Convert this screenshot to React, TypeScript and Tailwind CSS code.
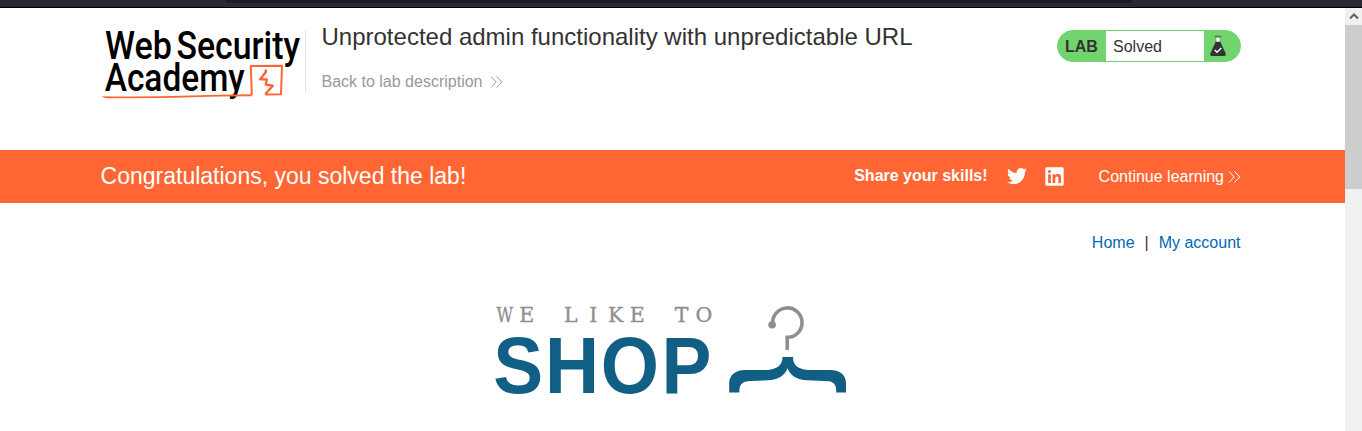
import { FaLinkedin, FaTwitter } from 'react-icons/fa';

function Chevrons({ className }: { className: string }) {
  return (
    <svg className={className} width="13" height="12" viewBox="0 0 13 12" fill="none" stroke="currentColor" strokeWidth="1">
      <path d="M1 .5 6.2 6 1 11.5M6.5 .5 11.8 6 6.5 11.5" />
    </svg>
  );
}

function AcademyLogo() {
  return (
    <svg className="block shrink-0 overflow-visible" width="205" height="78" viewBox="100 25 205 78" fontFamily="Roboto, sans-serif" fontWeight="500" fontSize="38">
      <g fill="#000">
        <text x="105" y="58.7" textLength="67" lengthAdjust="spacingAndGlyphs">Web</text>
        <text x="176.5" y="58.7" textLength="123.5" lengthAdjust="spacingAndGlyphs">Security</text>
        <text x="104.7" y="91.2" textLength="140" lengthAdjust="spacingAndGlyphs">Academy</text>
      </g>
      <g fill="none" stroke="#ff6633" strokeLinejoin="round">
        <path d="M251.8 95.2 250.8 66 282 65.8 281 94.2 265.2 94.4" strokeWidth="2" />
        <path d="M265.2 94.2 272.8 85.8 265.8 84.6 266.8 79.4 260.2 79.2 265.8 72V69.5" strokeWidth="2.4" />
      </g>
      <path d="M101.7 96.3Q145 97 190 95.6T252 94.3L251.5 96.2Q220 96.3 190 97.3T107 98.2Q103 97.7 101.7 96.3Z" fill="#ff6633" />
    </svg>
  );
}

function Flask() {
  return (
    <svg width="18" height="22" viewBox="0 0 18 22">
      <path d="M5.7 1.5H12.3" stroke="#52745a" strokeWidth="1.3" />
      <path d="M6.9 2.3H11.1V7.5H6.9Z" fill="#fff" stroke="#689b6b" strokeWidth=".8" />
      <path d="M6.7 6.8H11.3L16.8 18.7Q17.3 20.9 15.2 21H2.8Q.7 20.9 1.2 18.7Z" fill="#333332" />
      <path d="m5.7 15 2.3 2.3 4.3-4.3" fill="none" stroke="#fff" strokeWidth="1.4" />
    </svg>
  );
}

function ShopLogo() {
  return (
    <svg className="block overflow-visible" width="354" height="92" viewBox="494 304 354 92">
      <g fill="#8f8f8f" stroke="#8f8f8f" strokeWidth=".35" fontFamily="'DejaVu Serif', serif" fontSize="20.5">
        <text x="496.5" y="321.5" textLength="16.5" lengthAdjust="spacingAndGlyphs">W</text>
        <text x="526.8 570.7 593.2 615.7 637.3 681.5 704" y="321.5" textAnchor="middle">ELIKETO</text>
      </g>
      <text transform="scale(.93 1)" x="530.5 586 646 711.3" y="392.7" fill="#115f85" fontFamily="'Liberation Sans', sans-serif" fontWeight="700" fontSize="80.5">SHOP</text>
      <path d="M772.7 324A14.7 14.7 0 1 1 787.2 337.3V350" fill="none" stroke="#8f8f8f" strokeWidth="3.6" />
      <circle cx="772.1" cy="324.7" r="3.8" fill="#8f8f8f" />
      <path d="M782.5 357H793C793 366 799 369.7 809 369.9H830C841 370.2 846 375.5 846 383V392.5H836.3C836.3 384 834 381 825 381L807 380.2C797 379.7 790.5 376 787.6 368.2C784.5 376 778 379.7 768 380.2L751 381C742 381.3 739.3 384 739.3 392.5H729.2V383C729.2 375.5 735 370.2 745 369.9H766C776 369.7 782.5 366 782.5 357Z" fill="#115f85" />
    </svg>
  );
}

function LabStatus() {
  return (
    <div className="mt-[5px] flex h-8 w-[184px] overflow-hidden rounded-full border border-[#72d46e] bg-[#72d46e] text-[#333332]">
      <span className="flex w-12 items-center pt-0.5 pl-[7px] font-bold">LAB</span>
      <span className="flex w-[98px] items-center bg-white pt-px pl-[7px]">Solved</span>
      <span className="flex items-center pl-[5px]"><Flask /></span>
    </div>
  );
}

export default function App() {
  return (
    <div className="flex h-[431px] w-[1362px] flex-col overflow-hidden bg-white font-['Liberation_Sans',Arial,sans-serif] text-base leading-6 text-[#333332]">
      <div className="h-2 shrink-0 border-b border-black bg-[#2b2a33] pl-[226px]">
        <div className="h-[3px] w-[906px] rounded-b bg-[#1c1b22]" />
      </div>
      <div className="flex min-h-0 flex-1">
        <main className="w-[1345px]">
          <header className="flex h-[142px] items-start pr-[104px] pl-[100px] pt-[17px]">
            <AcademyLogo />
            <div className="mt-[5px] h-[62px] w-px bg-[#e2e2e2]" />
            <div className="flex-1 pl-[15.5px]">
              <h1 className="text-2xl leading-6">Unprotected admin functionality with unpredictable URL</h1>
              <a className="mt-[21px] flex items-center text-[#999]">Back to lab description<Chevrons className="ml-2" /></a>
            </div>
            <LabStatus />
          </header>
          <section className="flex h-[53px] items-center bg-[#ff6633] pr-[104px] pl-[100.6px] text-white">
            <p className="mb-px flex-1 text-[23px] leading-6">Congratulations, you solved the lab!</p>
            <span className="mb-px font-bold">Share your skills!</span>
            <FaTwitter className="mb-px ml-[19px] size-5" />
            <FaLinkedin className="ml-[17px] size-[21px]" />
            <a className="ml-[34px] flex items-center">Continue learning<Chevrons className="ml-[4px]" /></a>
          </section>
          <nav className="flex justify-end gap-[10px] pt-[28px] pr-[104.5px] text-[#0069b4]">
            <a>Home</a><span className="text-[#5c2434]">|</span><a>My account</a>
          </nav>
          <div className="pt-[49px] pl-[494px]"><ShopLogo /></div>
        </main>
        <aside className="w-[17px] bg-[#f0f0f0]">
          <div className="flex h-[17px] items-center justify-center">
            <svg width="10" height="7" viewBox="0 0 10 7" fill="none" stroke="#606060" strokeWidth="2"><path d="m1 5.5 4-4 4 4" /></svg>
          </div>
          <div className="h-[164px] bg-[#cdcdcd]" />
        </aside>
      </div>
    </div>
  );
}
